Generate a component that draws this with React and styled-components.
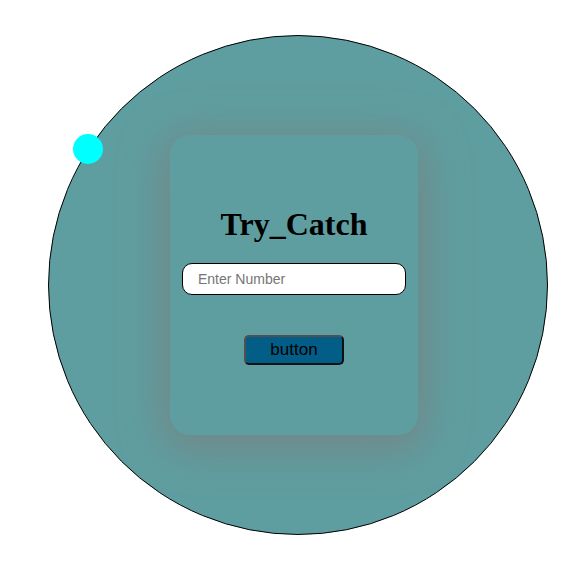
import React from "react";
import styled, { createGlobalStyle } from "styled-components";

const GlobalStyle = createGlobalStyle`
  body {
    margin: 0;
    background: #fff;
    font-family: "Liberation Sans", Arial, sans-serif;
  }
`;

const Page = styled.div`
  width: 586px;
  height: 574px;
  padding: 35px 0 0 48px;
  box-sizing: border-box;
`;

const Circle = styled.div`
  position: relative;
  width: 500px;
  height: 500px;
  box-sizing: border-box;
  border: 1px solid #000;
  border-radius: 50%;
  background: #5f9ea0;
  display: flex;
  align-items: center;
  justify-content: center;
`;

const Dot = styled.span`
  position: absolute;
  left: 24px;
  top: 98px;
  width: 30px;
  height: 30px;
  border-radius: 50%;
  background: #00ffff;
`;

const Card = styled.div`
  width: 248px;
  height: 300px;
  margin-right: 8px;
  box-sizing: border-box;
  padding-top: 71px;
  border-radius: 20px;
  background: #5f9ea0;
  box-shadow: 0 8px 40px 8px rgba(120, 128, 128, 0.75);
  display: flex;
  flex-direction: column;
  align-items: center;
`;

const Title = styled.h1`
  margin: 0 0 20px;
  font-family: "Liberation Serif", "Times New Roman", serif;
  font-size: 32px;
  font-weight: bold;
  color: #000;
`;

const NumberInput = styled.input`
  width: 224px;
  height: 32px;
  box-sizing: border-box;
  padding: 0 15px;
  border: 1px solid #000;
  border-radius: 10px;
  background: #fff;
  font-family: "Liberation Sans", Arial, sans-serif;
  font-size: 14px;
  outline: none;

  &::placeholder {
    color: #757575;
  }
`;

const Button = styled.button`
  margin-top: 40px;
  width: 100px;
  height: 30px;
  border: 2px solid;
  border-color: #505050 #111 #111 #505050;
  border-radius: 5px;
  background: #025d87;
  color: #000;
  font-family: "Liberation Sans", Arial, sans-serif;
  font-size: 17px;
  cursor: pointer;
`;

export default function App() {
  return (
    <>
      <GlobalStyle />
      <Page>
        <Circle>
          <Dot />
          <Card>
            <Title>Try_Catch</Title>
            <NumberInput type="number" placeholder="Enter Number" />
            <Button>button</Button>
          </Card>
        </Circle>
      </Page>
    </>
  );
}
